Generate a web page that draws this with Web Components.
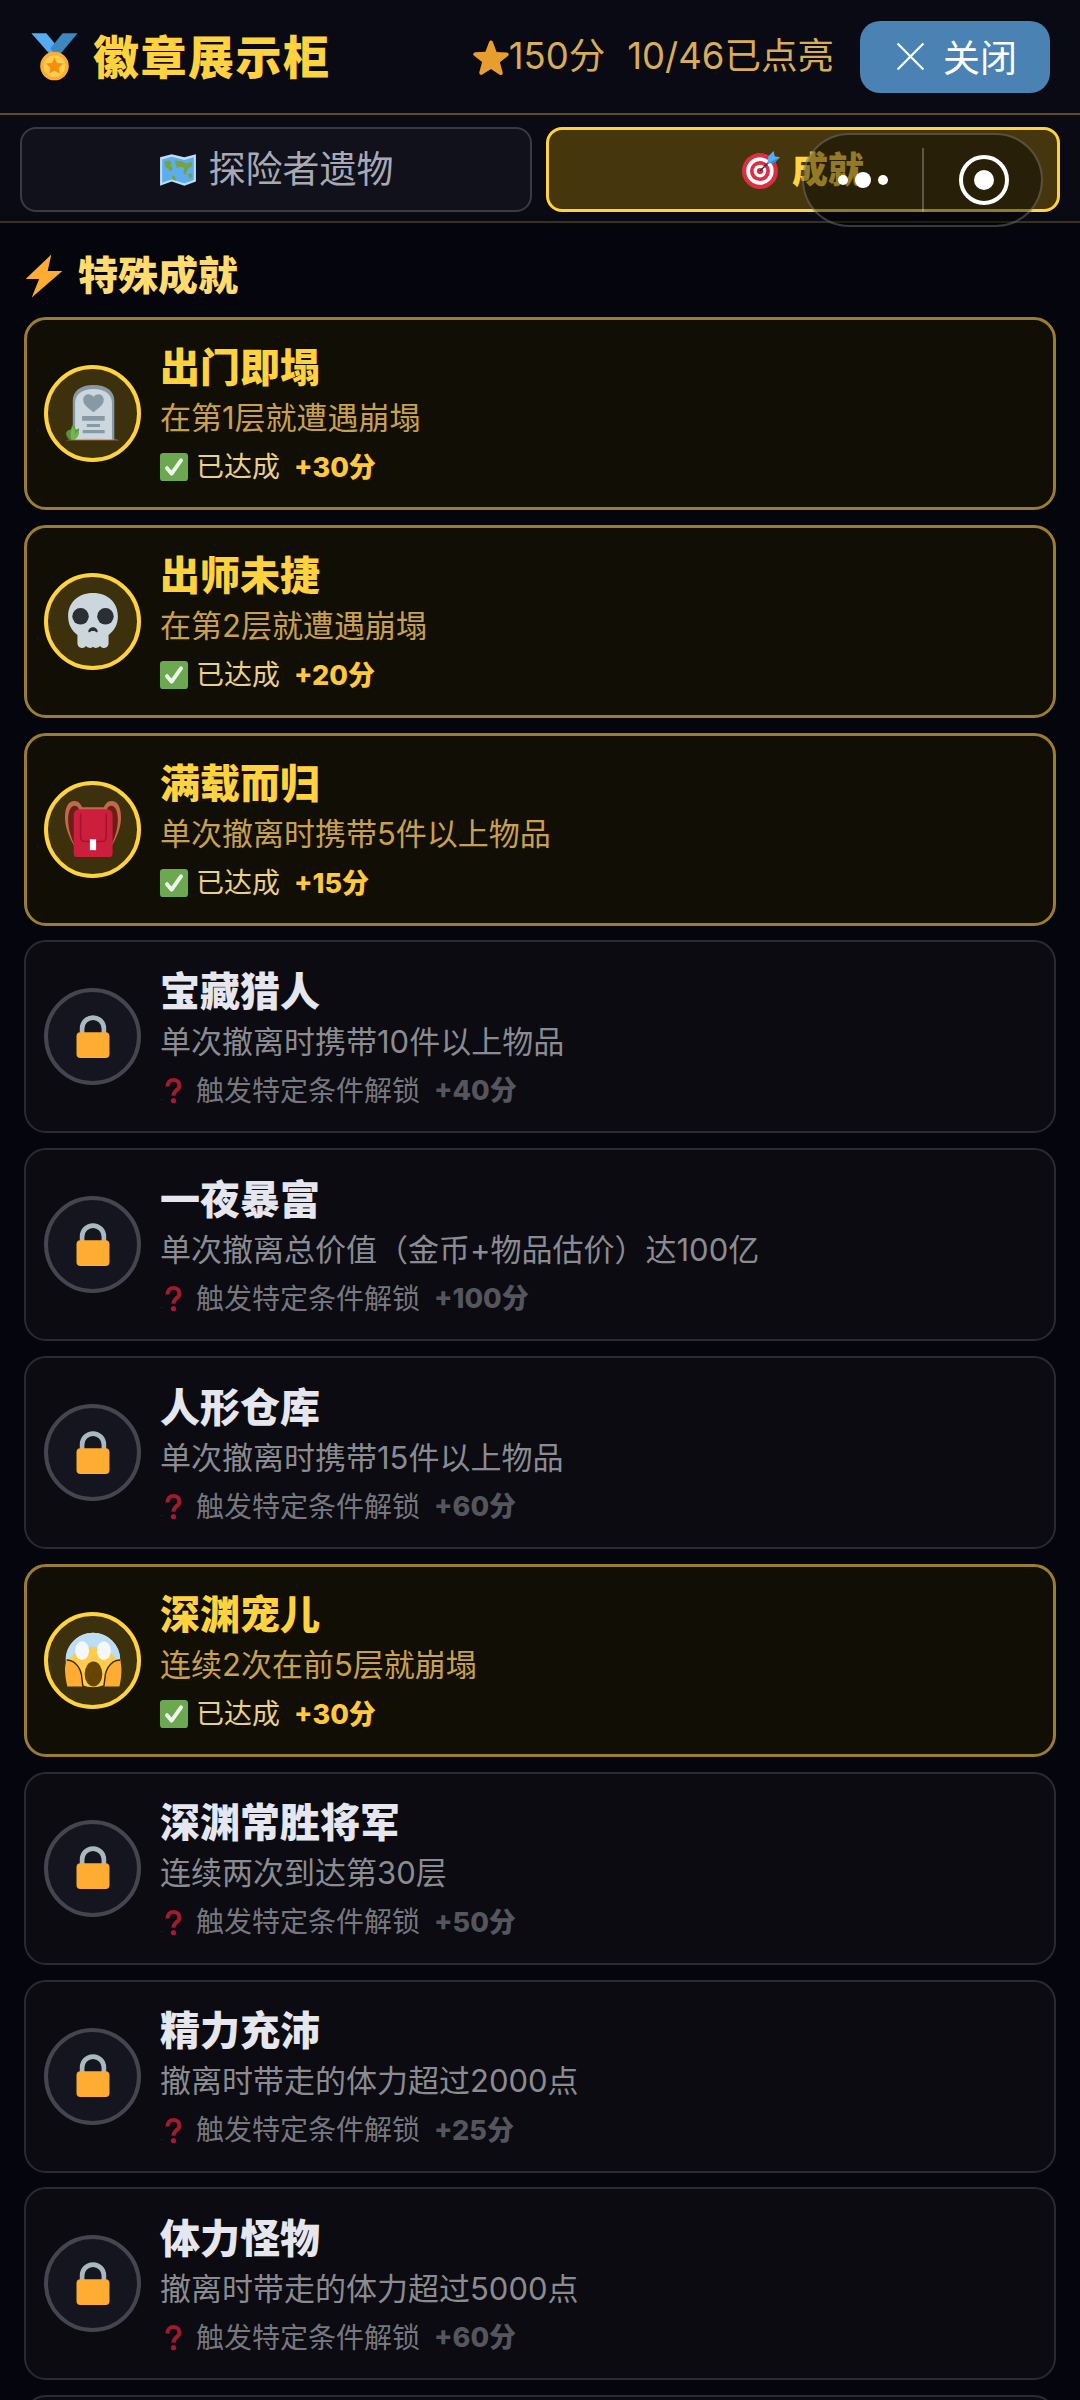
<!DOCTYPE html>
<html lang="zh-CN">
<head>
<meta charset="utf-8">
<title>徽章展示柜</title>
<style>
html,body{margin:0;padding:0;height:2400px;overflow:hidden;background:#05050d}
body{font-family:Inter,"Noto Sans CJK SC",sans-serif}
</style>
</head>
<body>
<badge-app>
  <app-header slot="header" score="150分" progress="10/46已点亮">徽章展示柜</app-header>
  <tab-bar slot="tabs">
    <tab-item icon="map">探险者遗物</tab-item>
    <tab-item icon="target" active>成就</tab-item>
  </tab-bar>
  <wx-capsule slot="overlay"></wx-capsule>
  <section-title icon="bolt">特殊成就</section-title>
  <ach-card done icon="tomb"><span slot="name">出门即塌</span><span slot="desc">在第1层就遭遇崩塌</span><span slot="points">+30分</span></ach-card>
  <ach-card done icon="skull"><span slot="name">出师未捷</span><span slot="desc">在第2层就遭遇崩塌</span><span slot="points">+20分</span></ach-card>
  <ach-card done icon="pack"><span slot="name">满载而归</span><span slot="desc">单次撤离时携带5件以上物品</span><span slot="points">+15分</span></ach-card>
  <ach-card><span slot="name">宝藏猎人</span><span slot="desc">单次撤离时携带10件以上物品</span><span slot="points">+40分</span></ach-card>
  <ach-card><span slot="name">一夜暴富</span><span slot="desc">单次撤离总价值（金币+物品估价）达100亿</span><span slot="points">+100分</span></ach-card>
  <ach-card><span slot="name">人形仓库</span><span slot="desc">单次撤离时携带15件以上物品</span><span slot="points">+60分</span></ach-card>
  <ach-card done icon="scream"><span slot="name">深渊宠儿</span><span slot="desc">连续2次在前5层就崩塌</span><span slot="points">+30分</span></ach-card>
  <ach-card><span slot="name">深渊常胜将军</span><span slot="desc">连续两次到达第30层</span><span slot="points">+50分</span></ach-card>
  <ach-card><span slot="name">精力充沛</span><span slot="desc">撤离时带走的体力超过2000点</span><span slot="points">+25分</span></ach-card>
  <ach-card><span slot="name">体力怪物</span><span slot="desc">撤离时带走的体力超过5000点</span><span slot="points">+60分</span></ach-card>
  <ach-card></ach-card>
</badge-app>
<script>
const ICONS = {
medal:`<path fill="#55ACEE" d="M1 1h11l10 12-6 5z"/><path fill="#3B88C3" d="M35 1H24l-9 11 5 7z"/><path fill="#FFAC33" d="M14.500 15h7v5h-7z"/><circle cx="18" cy="25" r="10.500" fill="#FFAC33"/><circle cx="18" cy="25" r="8" fill="#FFCC4D"/><path fill="#F4900C" d="M18 18.700l1.900 4 4.400.5-3.200 3 .8 4.300-3.900-2.100-3.900 2.100.8-4.300-3.200-3 4.400-.5z"/>`,
star:`<path fill="#E89E2E" d="M18 1.500c.9 0 1.600.7 2 1.700l3.600 9.700 10.100.5c2 .1 2.700 2.400 1.200 3.600l-8 6.300 2.800 10.200c.5 1.900-1.500 3.300-3.100 2.200L18 30l-8.600 5.500c-1.600 1.100-3.600-.3-3.100-2.200l2.800-10.200-8-6.300c-1.500-1.200-.8-3.500 1.200-3.600l10.100-.5L16 3.200c.4-1 1.100-1.700 2-1.700z"/>`,
map:`<path fill="#BBDDF5" d="M1 6l11-3 12 3 11-3v26l-11 4-12-4-11 4z"/><path fill="#5DADEC" d="M3 8l9-2.500 12 3 9-2.500v21.500l-9 3-12-3.500-9 3z"/><path fill="#77A33E" d="M5 10l5-1 2 2-1 3 2 2-2 4-2-3-3-2zM15 9l7 1 4 2 5-2v5l-3 1-2 4-1 3-2-3 1-4-4-1-3 1-1-3zM12 23l3 1 1 4-3-1zM27 22l4-1 1 3-3 2z"/>`,
target:`<circle cx="17" cy="19" r="17" fill="#DD2E44"/><circle cx="17" cy="19" r="13" fill="#FFF"/><circle cx="17" cy="19" r="9.500" fill="#DD2E44"/><circle cx="17" cy="19" r="6" fill="#FFF"/><circle cx="17" cy="19" r="3" fill="#DD2E44"/><path stroke="#292F33" stroke-width="1.500" d="M17 19l10-10"/><path fill="#55ACEE" d="M24 12l1-7 5-5 1 5 5 1-5 5z"/><path fill="#3B88C3" d="M24.500 11.500L36 6l-5 5z"/>`,
bolt:`<path fill="#FFAC33" d="M24 .5L3 20.500h11L8 35.500 33 14H21z"/>`,
tomb:`<path fill="#8899A6" d="M5 35V10C5 4 10 0 18.300 0s13.400 4 13.400 10v25z"/><path fill="#CCD6DD" d="M6.500 35V11.500C6.500 6 11 2.500 18.300 2.500S30.200 6 30.200 11.500V35z"/><path fill="#8899A6" d="M18.300 17.500c-3.200-2.500-6.600-4.600-6.600-8 0-3.700 4.600-4.800 6.600-1.900 2-2.900 6.600-1.800 6.600 1.900 0 3.400-3.400 5.500-6.600 8zM11 20h14.500v3H11zM14 25h8.500v2H14zM11.400 29h14.100v2H11.400z"/><path fill="#D99E82" d="M.5 35.500c8-1.200 27-1.200 34.500 0z"/><path fill="#5C913B" d="M.6 31c1-2 2.400-2.400 3.200-2.300.2-1.200.5-2.200 1-3 1.300.9 2 2.200 2.200 3.300.7-.5 1.300-.9 2-1 .3 3.200-1 7-4 7H3.500C2 35 1 33 .6 31z"/><path fill="#77B255" d="M4 35c-.8-2.500-.5-6 1-8.500 1.400 1.500 1.800 3.500 1.400 5.600.5-1 1.400-2.600 2.600-3.100.2 2.600-1 6-3.500 6z"/>`,
skull:`<path fill="#CCD6DD" d="M18 0C8 0 2 6.500 2 15c0 5.500 2.500 9.500 6 12v5.500a3 3 0 0 0 5.500 1.500 3 3 0 0 0 4.500.5 3 3 0 0 0 4.500-.5 3 3 0 0 0 5.500-1.500V27c3.500-2.500 6-6.500 6-12C34 6.500 28 0 18 0z"/><circle cx="10" cy="15" r="5.300" fill="#292F33"/><circle cx="26" cy="15" r="5.300" fill="#292F33"/><path fill="#292F33" d="M18 22c1.500 0 3 1.300 3 2.600 0 .9-.9.8-1.300.3-.4-.5-1-.5-1.700-.5s-1.300 0-1.700.5c-.4.5-1.300.6-1.300-.3 0-1.300 1.500-2.600 3-2.600z"/>`,
pack:`<path fill="#C1694F" d="M0 11C0 4 2 0 6 0c3 0 4 2 5 4h14c1-2 2-4 5-4 4 0 6 4 6 11 0 6-3 13-6 18H6C3 24 0 17 0 11z"/><path fill="#662113" d="M2 12C2 6 4 3 6 3c3 0 3.500 3 3.500 6v21H7C4 24 2 18 2 12zM34 12c0-6-2-9-4-9-3 0-3.500 3-3.500 6v21H29c3-6 5-12 5-18z"/><path fill="#CC1F3D" d="M9 5.300h18c2 0 3.600 1.600 3.600 3.600V34c0 1.200-1 2-2 2H7.600c-1 0-2-.8-2-2V8.900c0-2 1.600-3.600 3.400-3.600z"/><path fill="none" stroke="#A0142E" stroke-width="1" d="M10 8v15c0 2 1 3 3 3h10.500c2 0 3-1 3-3V8"/><path fill="#FFF" d="M16 24.600h4v7h-4z"/>`,
scream:`<circle cx="18" cy="18" r="17.500" fill="#FFCC4D"/><path fill="#BBDDF5" d="M18 .5C8.300.5.500 8.300.500 18c0 1 .1 2 .3 3C4 14 11 9.500 18 9.500S32 14 35.200 21c.2-1 .3-2 .3-3C35.500 8.300 27.700.5 18 .5z"/><ellipse cx="11" cy="12" rx="4.500" ry="6" fill="#F5F8FA"/><ellipse cx="25" cy="12" rx="4.500" ry="6" fill="#F5F8FA"/><ellipse cx="18.300" cy="27" rx="5.700" ry="8" fill="#664500"/><path fill="#FFAC33" d="M1 18c4 0 8 3 9.500 9l1 8H1.500C.5 31 0 27 0 24c0-2 .4-4 1-6zM35.500 18c-4 0-8 3-9.500 9l-1 8h10c1-4 1.300-8 1.300-11 0-2-.4-4-.8-6z"/><path fill="none" stroke="#3A2A08" stroke-width=".9" d="M1 18c4 0 8 3 9.500 9l1 8M35.500 18c-4 0-8 3-9.500 9l-1 8"/>`,
lock:`<path fill="none" stroke="#AAB8C2" stroke-width="3" d="M11 17v-4.500a7 7 0 0 1 14 0V17"/><rect x="7.400" y="15" width="21.200" height="16.500" rx="2.500" fill="#FFAC33"/>`,
check:`<rect width="36" height="36" rx="4" fill="#6BA84F"/><path fill="none" stroke="#F1F6EC" stroke-width="5" stroke-linecap="round" stroke-linejoin="round" d="M9 19.500l6 7L27 9.500"/>`,
ask:`<path fill="none" stroke="#A01A30" stroke-width="5.500" d="M10 12.500C10 7 13.500 4 18 4s8 3 8 7.500c0 5.500-8 6.500-8 13.500"/><circle cx="18" cy="31.500" r="3.500" fill="#A01A30"/>`,
close:`<path fill="none" stroke="#fff" stroke-width="2.600" d="M3 3l30 30M33 3L3 33"/>`
};
function def(name, css, html, init){
  const t=document.createElement('template');
  t.innerHTML=`<style>${css}</style>${html}`;
  customElements.define(name,class extends HTMLElement{
    constructor(){super();this.attachShadow({mode:'open'}).appendChild(t.content.cloneNode(true));}
    connectedCallback(){ if(init) init(this,this.shadowRoot); }
  });
}
const setIcon=(el,n)=>{el.shadowRoot.querySelector('svg').innerHTML=ICONS[n]||''};
def('app-icon',`:host{display:inline-flex;flex:none;width:var(--s,36px);height:var(--s,36px)}svg{display:block;width:100%;height:100%;overflow:visible}`,`<svg viewBox="0 0 36 36" aria-hidden="true"></svg>`,
  (h)=>{if(h.hasAttribute('name'))setIcon(h,h.getAttribute('name'))});

def('badge-app',`:host{display:block;position:relative;width:1080px;height:2400px;overflow:hidden;background:#05050d;color:#fff;font-family:Inter,"Noto Sans CJK SC",sans-serif}
.list{display:flex;flex-direction:column;gap:14.85px;padding:0 24px}`,
`<slot name="header"></slot><slot name="tabs"></slot><div class="list"><slot></slot></div><slot name="overlay"></slot>`);

def('app-header',`:host{display:flex;align-items:center;height:113px;padding:0 30px;background:#0a0a14;border-bottom:2px solid #5e4c24;width:1020px}
.t{font-size:46px;font-weight:900;color:#ffd23f;letter-spacing:1.500px;margin-left:14px;line-height:1}
.sp{flex:1}
.s{display:flex;align-items:center;font-size:36.500px;color:#d8ad55;line-height:1;font-weight:400}
.s+.s{margin-left:22px}
.b{display:flex;align-items:center;justify-content:center;gap:17px;width:190px;height:72px;border-radius:20px;background:#4a82b4;color:#fff;font-size:37px;margin-left:26px;font-weight:400;padding-left:2px;box-sizing:border-box}
.b span{position:relative;top:-1px}
app-icon.m{--s:49px}app-icon.st{--s:36px;margin-right:0}app-icon.x{--s:31px}`,
`<app-icon class="m" name="medal"></app-icon><span class="t"><slot></slot></span><span class="sp"></span>
<span class="s"><app-icon class="st" name="star"></app-icon><span id="a"></span></span><span class="s" id="p"></span>
<span class="b"><app-icon class="x" name="close"></app-icon><span>关闭</span></span>`,
(h,r)=>{r.getElementById('a').textContent=h.getAttribute('score');r.getElementById('p').textContent=h.getAttribute('progress')});

def('tab-bar',`:host{display:flex;gap:14px;padding:12px 20px 9px;background:#0a0a14;border-bottom:2px solid #3b3119;width:1040px}`,`<slot></slot>`);

def('tab-item',`:host{flex:1;display:flex;align-items:center;justify-content:center;gap:12px;height:85px;box-sizing:border-box;border-radius:16px;background:#10111a;border:2px solid #3a3a46;color:#a9a9b5;font-size:37px;line-height:1}
:host([active]){background:#46360e;border:3px solid #ffd23f;color:#ffd23f;font-weight:900;font-size:36px}
app-icon{--s:38px}`,
`<app-icon></app-icon><span><slot></slot></span>`,
(h,r)=>{setIcon(r.querySelector('app-icon'),h.getAttribute('icon'))});

def('section-title',`:host{display:flex;align-items:center;gap:12px;height:82px;padding-top:12px;margin-bottom:-15px;margin-left:-2px;font-size:40px;font-weight:900;color:#ffdb70;line-height:1}
app-icon{--s:44px}`,
`<app-icon></app-icon><span><slot></slot></span>`,
(h,r)=>{setIcon(r.querySelector('app-icon'),h.getAttribute('icon'))});

def('ach-card',`:host{display:flex;align-items:center;gap:19px;height:193px;flex:none;box-sizing:border-box;padding:14px 18px;border:2px solid #2a2a33;border-radius:22px;background:#0b0b11;color:#8b8b93}
:host([done]){border:3px solid #9a7d2f;background:#110e06;color:#c9a14e;padding:14px 17px}
.c{flex:none;width:97px;height:97px;box-sizing:border-box;border-radius:50%;border:4px solid #45454f;background:#14151e;display:flex;align-items:center;justify-content:center}
:host([done]) .c{border-color:#ffd23f;background:#3d300c}
.c app-icon{--s:56px}
.col{display:flex;flex-direction:column;padding-top:7px;min-width:0}
.n{font-size:40px;font-weight:900;line-height:55px;color:#e6e6ee;height:55px}
:host([done]) .n{color:#ffd23f}
.d{font-size:31px;line-height:46px;height:46px;font-weight:400;white-space:nowrap}
.r{display:flex;align-items:center;height:52px;font-size:28px;line-height:1;color:#77777f;font-weight:400;white-space:nowrap}
:host([done]) .r{color:#e8cf8a}
.r app-icon{--s:28px;margin-right:8px}
:host(:not([done])) .r app-icon{--s:27px;margin:0 9px 0 0}
.p{font-size:27px;font-weight:800;color:#55555d;margin-left:14px}
:host([done]) .p{color:#ffc83d}`,
`<div class="c"><app-icon id="i"></app-icon></div>
<div class="col"><div class="n"><slot name="name"></slot></div><div class="d"><slot name="desc"></slot></div>
<div class="r"><app-icon id="k"></app-icon><span id="st"></span><span class="p"><slot name="points"></slot></span></div></div>`,
(h,r)=>{const done=h.hasAttribute('done');
 if(!h.children.length){r.querySelector('.c').style.visibility='hidden';r.querySelector('.col').style.visibility='hidden';return}
 setIcon(r.getElementById('i'),done?h.getAttribute('icon'):'lock');
 setIcon(r.getElementById('k'),done?'check':'ask');
 r.getElementById('st').textContent=done?'已达成':'触发特定条件解锁';});

def('wx-capsule',`:host{position:absolute;left:802px;top:133px;width:241px;height:94px;box-sizing:border-box;border-radius:47px;border:2.500px solid rgba(255,255,255,.22);background:rgba(0,0,0,.42);display:flex;align-items:center}
.l{width:118px;display:flex;align-items:center;justify-content:center;gap:7px}
.l i{display:block;border-radius:50%;background:#fff;width:10px;height:10px}
.l i.b{width:16px;height:16px}
.v{width:2px;height:64px;background:rgba(255,255,255,.25)}
.r{flex:1;display:flex;align-items:center;justify-content:center;padding-left:2px}
.o{width:50px;height:50px;box-sizing:border-box;border:4.500px solid #fff;border-radius:50%;display:flex;align-items:center;justify-content:center}
.o i{display:block;width:20px;height:20px;border-radius:50%;background:#fff}`,
`<div class="l"><i></i><i class="b"></i><i></i></div><div class="v"></div><div class="r"><div class="o"><i></i></div></div>`);
</script>
</body>
</html>
